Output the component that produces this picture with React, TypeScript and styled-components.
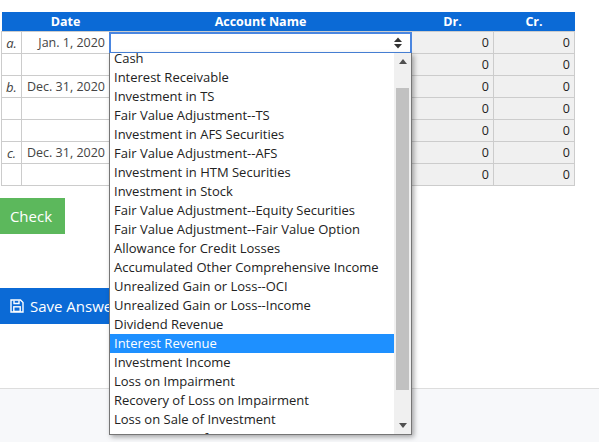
import React from "react";
import styled, { createGlobalStyle } from "styled-components";

const Global = createGlobalStyle`
  html, body { margin: 0; padding: 0; background: #fff; }
  body { font-family: "Open Sans", "Noto Sans", sans-serif; font-size: 13px; color: #333; }
`;
const Page = styled.div`
  position: relative;
  width: 599px;
  height: 442px;
  overflow: hidden;
  display: flex;
  flex-direction: column;
  padding-top: 12px;
  box-sizing: border-box;
`;
const Table = styled.table`
  margin-left: 1px;
  width: 573px;
  border-collapse: collapse;
  table-layout: fixed;
  font-size: 12.5px;
`;
const HeadCell = styled.th`
  background: #0b6ad6;
  color: #fff;
  height: 19px;
  padding: 0;
  font-weight: 700;
  text-align: center;
`;
const Cell = styled.td<{ $grey?: boolean; $letter?: boolean }>`
  height: 22px;
  padding: 0 ${(p) => (p.$letter ? "3px" : "4px")} 0 3px;
  box-sizing: border-box;
  border: 1px solid #ccc;
  white-space: nowrap;
  text-align: ${(p) => (p.$letter ? "center" : "right")};
  font-style: ${(p) => (p.$letter ? "italic" : "normal")};
  font-size: ${(p) => (p.$letter ? "13px" : "inherit")};
  background: ${(p) => (p.$grey ? "#f0f0f0" : "#fff")};
  color: ${(p) => (p.$grey ? "#222" : "#444")};
`;
const Check = styled.button`
  margin-top: 12px;
  width: 65px;
  height: 36px;
  border: 0;
  padding: 0 3px 0 0;
  background: #5cb85c;
  color: #fff;
  font: 15px "Open Sans", sans-serif;
`;
const Save = styled.button`
  margin-top: 54px;
  width: 140px;
  height: 36px;
  border: 0;
  padding: 0 0 0 10px;
  display: flex;
  align-items: center;
  gap: 6px;
  background: #0b6ad6;
  color: #fff;
  font: 15px "Open Sans", sans-serif;
  white-space: nowrap;
`;
const Footer = styled.div`
  margin-top: 64px;
  flex: 1;
  background: #f7f8fa;
  border-top: 1px solid #ddd;
`;
const SelectBox = styled.div`
  position: absolute;
  left: 109px;
  top: 32px;
  width: 303px;
  height: 22px;
  box-sizing: border-box;
  border: 2px solid #4a86e0;
  background: #fff;
  display: flex;
  align-items: center;
  justify-content: flex-end;
  padding-right: 7px;
`;
const Dropdown = styled.div`
  position: absolute;
  left: 109px;
  top: 53px;
  width: 303px;
  height: 382px;
  box-sizing: border-box;
  border: 1px solid #767676;
  border-top: 0;
  background: #fff;
  display: flex;
  overflow: hidden;
  box-shadow: 2px 2px 5px rgba(0, 0, 0, 0.35);
`;
const List = styled.ul`
  flex: 1;
  margin: -4px 0 0;
  padding: 0;
  list-style: none;
  min-width: 0;
`;
const Option = styled.li<{ $active?: boolean }>`
  height: 19px;
  line-height: 19px;
  padding-left: 4px;
  white-space: nowrap;
  color: ${(p) => (p.$active ? "#fff" : "#222")};
  background: ${(p) => (p.$active ? "#1e90ff" : "transparent")};
`;
const Scrollbar = styled.div`
  width: 17px;
  background: #f0f0f0;
  display: flex;
  flex-direction: column;
  align-items: center;
  flex-shrink: 0;
`;
const Arrow = styled.div`
  height: 17px;
  flex-shrink: 0;
  display: flex;
  align-items: center;
  justify-content: center;
`;
const Thumb = styled.div`
  width: 13px;
  height: 302px;
  margin-top: 18px;
  background: #c1c1c1;
`;
const Spacer = styled.div`
  flex: 1;
`;

const rows = [
  ["a.", "Jan. 1, 2020"],
  ["", ""],
  ["b.", "Dec. 31, 2020"],
  ["", ""],
  ["", ""],
  ["c.", "Dec. 31, 2020"],
  ["", ""],
];
const options = [
  "Cash",
  "Interest Receivable",
  "Investment in TS",
  "Fair Value Adjustment--TS",
  "Investment in AFS Securities",
  "Fair Value Adjustment--AFS",
  "Investment in HTM Securities",
  "Investment in Stock",
  "Fair Value Adjustment--Equity Securities",
  "Fair Value Adjustment--Fair Value Option",
  "Allowance for Credit Losses",
  "Accumulated Other Comprehensive Income",
  "Unrealized Gain or Loss--OCI",
  "Unrealized Gain or Loss--Income",
  "Dividend Revenue",
  "Interest Revenue",
  "Investment Income",
  "Loss on Impairment",
  "Recovery of Loss on Impairment",
  "Loss on Sale of Investment",
  "Amortization of Premium",
];

export default function App() {
  return (
    <Page>
      <Global />
      <Table>
        <colgroup>
          <col style={{ width: 20 }} />
          <col style={{ width: 88 }} />
          <col style={{ width: 302 }} />
          <col style={{ width: 82 }} />
          <col style={{ width: 81 }} />
        </colgroup>
        <thead>
          <tr>
            <HeadCell />
            <HeadCell>Date</HeadCell>
            <HeadCell>Account Name</HeadCell>
            <HeadCell>Dr.</HeadCell>
            <HeadCell>Cr.</HeadCell>
          </tr>
        </thead>
        <tbody>
          {rows.map((r, i) => (
            <tr key={i}>
              <Cell $letter>{r[0]}</Cell>
              <Cell>{r[1]}</Cell>
              <Cell />
              <Cell $grey>0</Cell>
              <Cell $grey>0</Cell>
            </tr>
          ))}
        </tbody>
      </Table>
      <Check>Check</Check>
      <Save>
        <svg width="14" height="14" viewBox="0 0 14 14" fill="none" stroke="#fff" strokeWidth="1.4">
          <path d="M1 1h9.5L13 3.5V13H1z" />
          <path d="M4 1.5v3h5v-3" />
          <rect x="3.8" y="7.8" width="6.4" height="4.6" />
        </svg>
        Save Answers
      </Save>
      <Footer />
      <SelectBox>
        <svg width="10" height="12" viewBox="0 0 10 12" fill="#333">
          <path d="M5 0.5 9 5H1z" />
          <path d="M5 11.5 1 7h8z" />
        </svg>
      </SelectBox>
      <Dropdown>
        <List>
          {options.map((o) => (
            <Option key={o} $active={o === "Interest Revenue"}>
              {o}
            </Option>
          ))}
        </List>
        <Scrollbar>
          <Arrow>
            <svg width="8" height="5" viewBox="0 0 8 5" fill="#505050">
              <path d="M4 0 8 5H0z" />
            </svg>
          </Arrow>
          <Thumb />
          <Spacer />
          <Arrow>
            <svg width="8" height="5" viewBox="0 0 8 5" fill="#505050">
              <path d="M4 5 8 0H0z" />
            </svg>
          </Arrow>
        </Scrollbar>
      </Dropdown>
    </Page>
  );
}
